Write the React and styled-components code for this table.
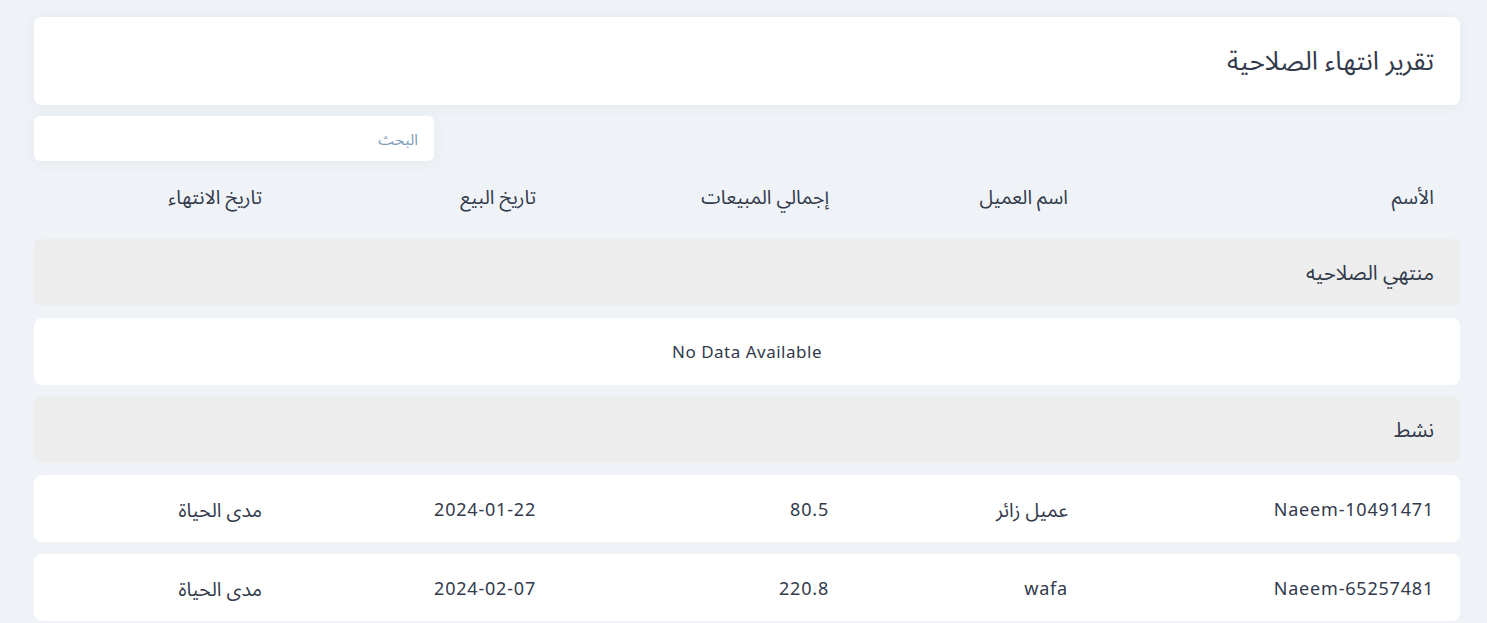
import React from "react";
import styled, { createGlobalStyle } from "styled-components";

const GlobalStyle = createGlobalStyle`
  html, body {
    margin: 0;
    padding: 0;
    background: #eff3f7;
  }
  body {
    font-family: "Noto Sans", "Noto Sans Arabic", "DejaVu Sans", sans-serif;
    color: #323a4b;
  }
`;

const isArabic = (s) => /[\u0600-\u06FF]/.test(s);

const Page = styled.div`
  direction: rtl;
  padding: 17px 27px 0 34px;
`;

const HeaderCard = styled.div`
  background: #fff;
  border-radius: 8px;
  height: 88px;
  display: flex;
  align-items: center;
  padding: 0 26px;
  box-shadow: 0 2px 14px rgba(60, 80, 110, 0.06);
`;

const Title = styled.h1`
  margin: 0;
  font-size: 26px;
  font-weight: 400;
  line-height: 1.2;
  color: #323a4b;
`;

const SearchWrap = styled.div`
  display: flex;
  justify-content: flex-end;
  margin-top: 11px;
`;

const SearchInput = styled.input`
  width: 400px;
  height: 45px;
  box-sizing: border-box;
  border: none;
  outline: none;
  border-radius: 6px;
  background: #fff;
  padding: 0 16px;
  font-family: inherit;
  font-size: 15.5px;
  direction: rtl;
  box-shadow: 0 2px 14px rgba(60, 80, 110, 0.06);
  &::placeholder {
    color: #7f9bb8;
  }
`;

const Table = styled.div`
  display: flex;
  flex-direction: column;
  gap: 11.75px;
  margin-top: 6px;
`;

const Row = styled.div`
  display: grid;
  grid-template-columns: 366px 239px 293px 274px 1fr;
  align-items: center;
  height: ${(p) => (p.$head ? "60px" : "67px")};
  padding: 0 26px;
  border-radius: 8px;
  background: ${(p) => (p.$head ? "transparent" : "#fff")};
`;

const Cell = styled.div`
  white-space: nowrap;
  line-height: 1.2;
  padding-top: 3px;
  font-size: ${(p) => (p.$ar ? "19.5px" : "18px")};
  letter-spacing: ${(p) => (p.$ar ? "0" : "0.8px")};
`;

const HeadCell = styled.div`
  white-space: nowrap;
  line-height: 1.2;
  font-size: 19.5px;
`;

const GroupRow = styled.div`
  display: flex;
  align-items: center;
  height: 67px;
  padding: 0 26px;
  border-radius: 8px;
  background: #ededed;
  font-size: 20.5px;
  line-height: 1.2;
`;

const EmptyRow = styled.div`
  display: flex;
  align-items: center;
  justify-content: center;
  height: 67px;
  border-radius: 8px;
  background: #fff;
  font-size: 17px;
  letter-spacing: 0.5px;
`;

const columns = ["الأسم", "اسم العميل", "إجمالي المبيعات", "تاريخ البيع", "تاريخ الانتهاء"];

const groups = [
  { title: "منتهي الصلاحيه", rows: [] },
  {
    title: "نشط",
    rows: [
      ["Naeem-10491471", "عميل زائر", "80.5", "2024-01-22", "مدى الحياة"],
      ["Naeem-65257481", "wafa", "220.8", "2024-02-07", "مدى الحياة"],
    ],
  },
];

export default function App() {
  return (
    <Page>
      <GlobalStyle />
      <HeaderCard>
        <Title>تقرير انتهاء الصلاحية</Title>
      </HeaderCard>
      <SearchWrap>
        <SearchInput placeholder="البحث" />
      </SearchWrap>
      <Table>
        <Row $head>
          {columns.map((c) => (
            <HeadCell key={c}>{c}</HeadCell>
          ))}
        </Row>
        {groups.map((g) => (
          <React.Fragment key={g.title}>
            <GroupRow>{g.title}</GroupRow>
            {g.rows.length === 0 ? (
              <EmptyRow>No Data Available</EmptyRow>
            ) : (
              g.rows.map((r) => (
                <Row key={r[0]}>
                  {r.map((v, i) => (
                    <Cell key={i} $ar={isArabic(v)}>
                      {v}
                    </Cell>
                  ))}
                </Row>
              ))
            )}
          </React.Fragment>
        ))}
      </Table>
    </Page>
  );
}
